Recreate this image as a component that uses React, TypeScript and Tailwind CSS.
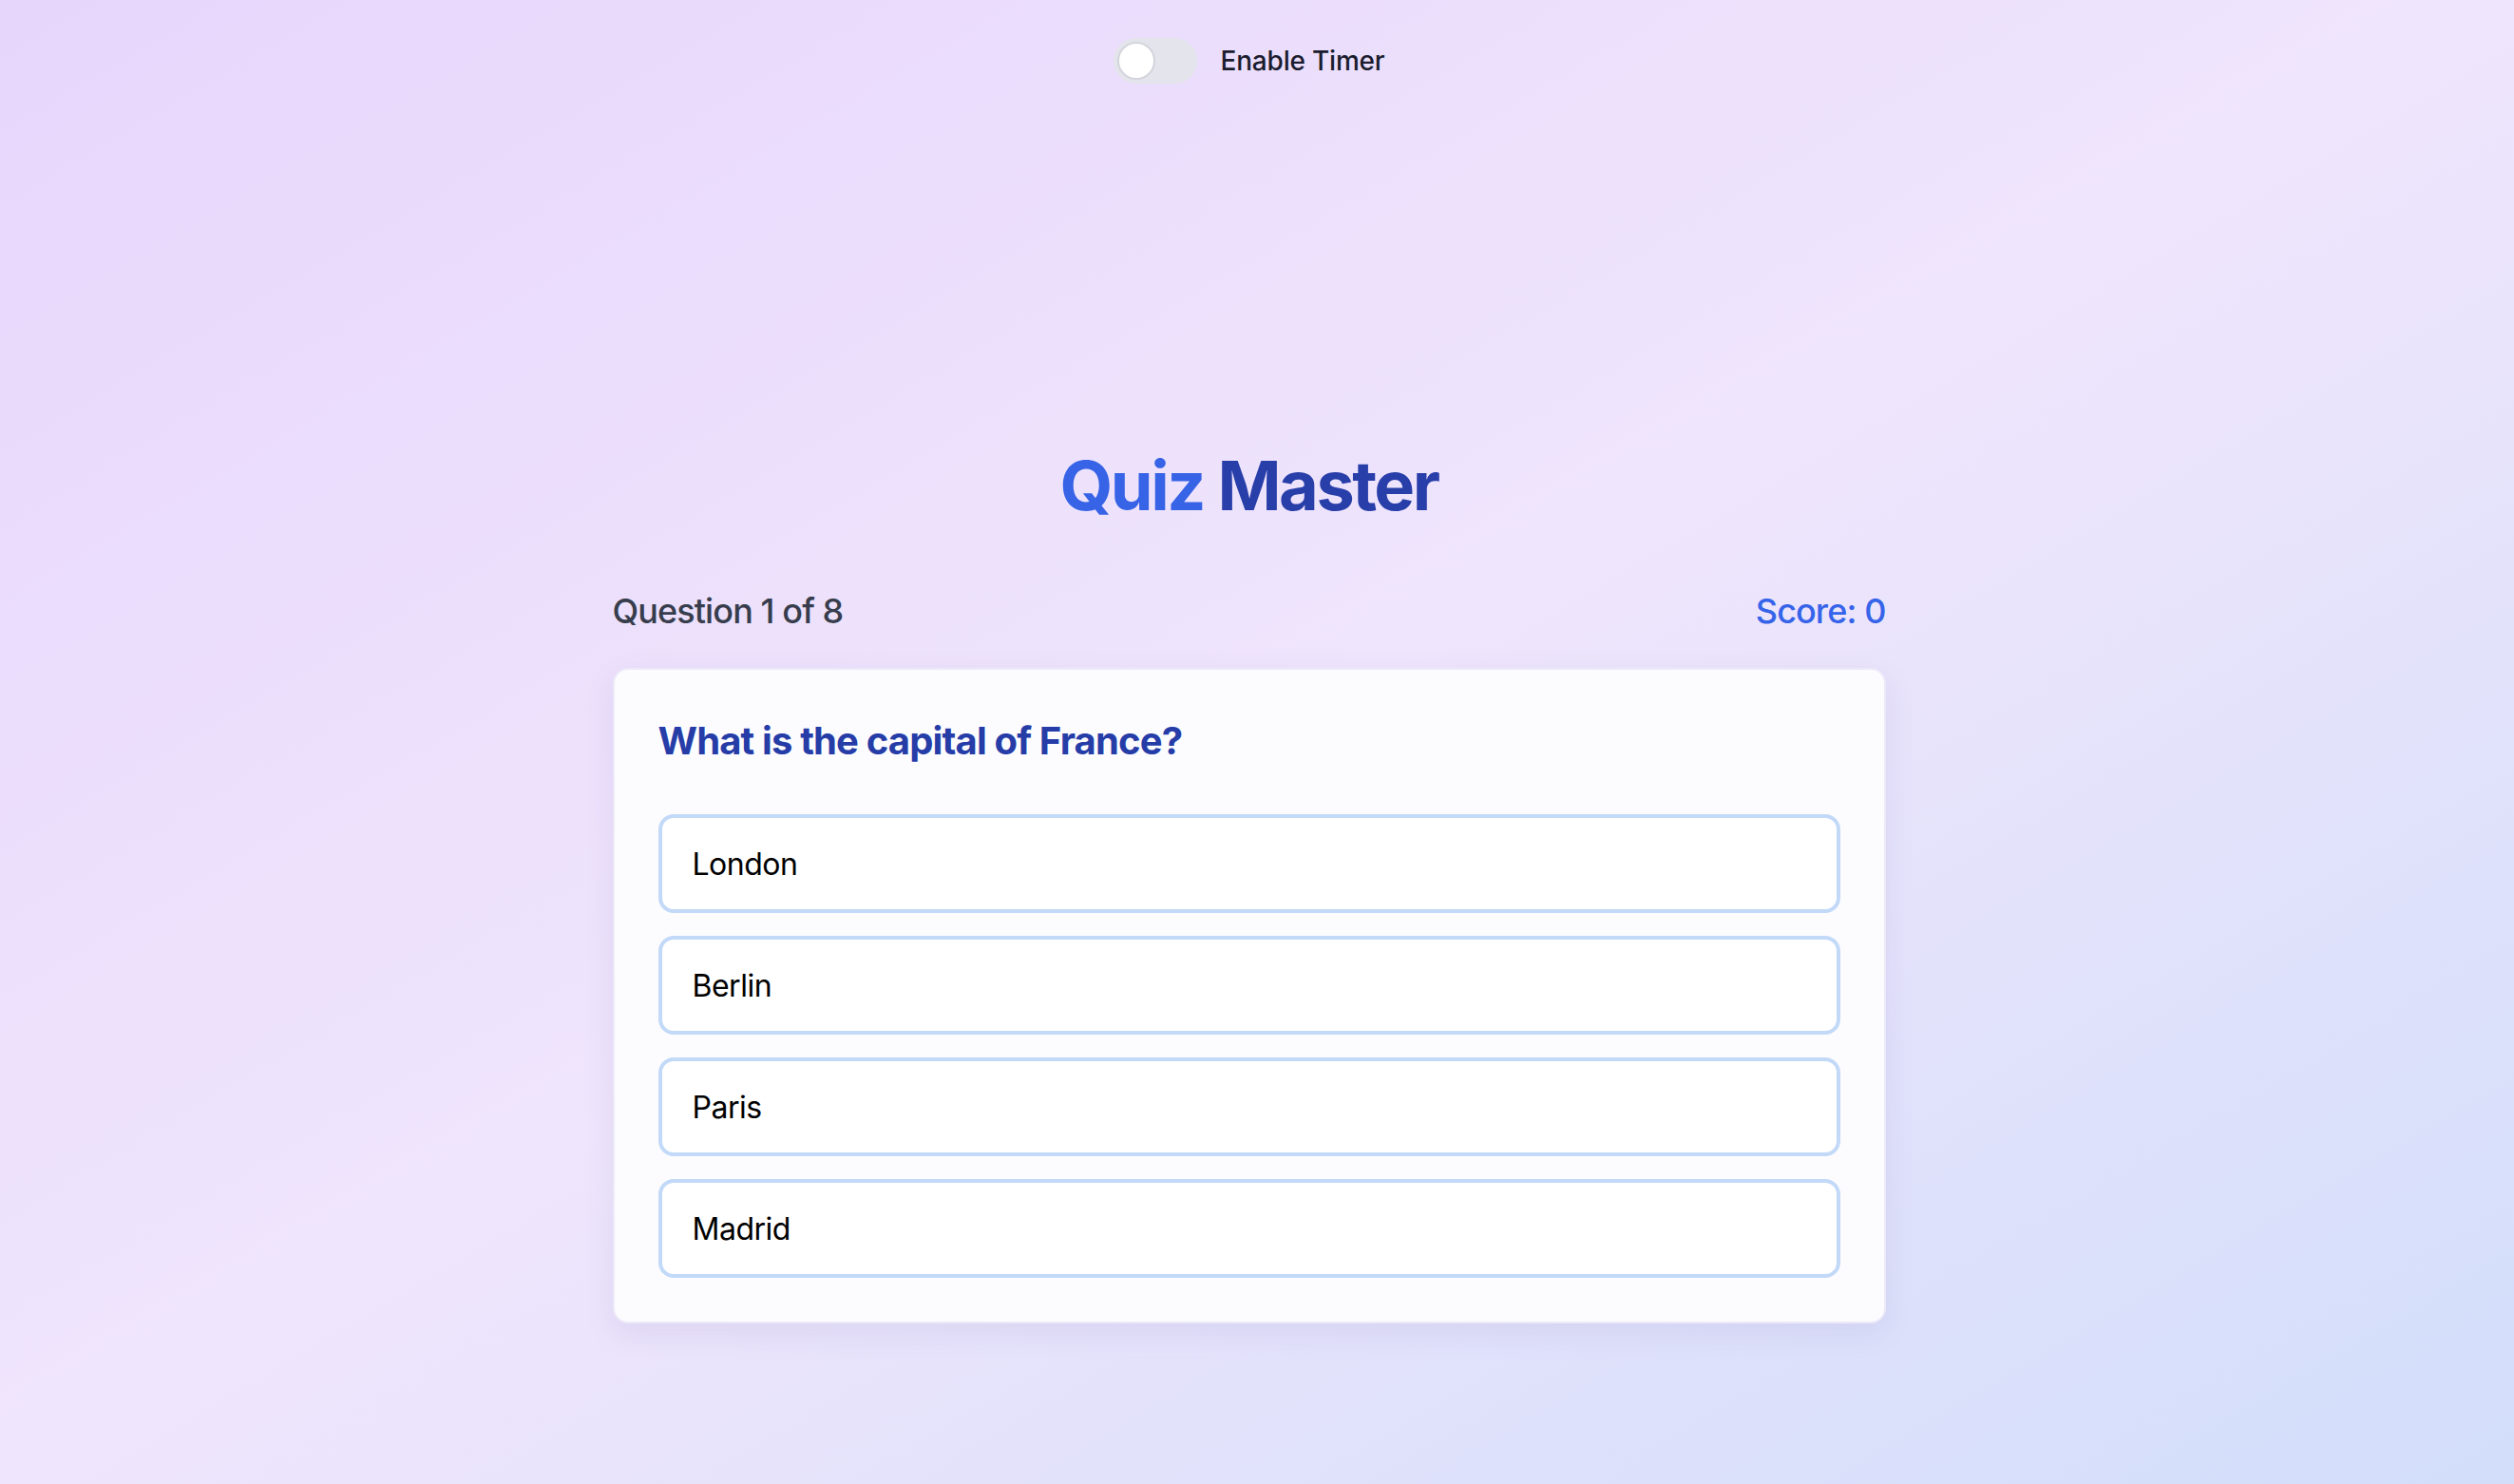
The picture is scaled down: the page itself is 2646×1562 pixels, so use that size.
import React from "react";

const options = ["London", "Berlin", "Paris", "Madrid"];

export default function App() {
  return (
    <div className="min-h-screen h-[1562px] w-full bg-linear-to-br from-[#e7d6fc] via-[#efe5fc] to-[#d2defa] pr-[17px] font-['Inter',sans-serif]">
      <div className="flex items-center justify-center gap-[25px] pt-[40px]">
        <button className="flex h-[48px] w-[88px] items-center rounded-full bg-[#e4e5ec] px-[4px]">
          <span className="block h-[40px] w-[40px] rounded-full border-2 border-[#d4d5dc] bg-white" />
        </button>
        <span className="text-[28px] leading-[40px] font-medium tracking-[-0.2px] text-[#1b1c2e]">Enable Timer</span>
      </div>

      <div className="mx-auto mt-[383px] w-[1340px]">
        <h1 className="mb-[64px] text-center text-[72px] leading-[80px] font-bold tracking-[-2.5px]">
          <span className="text-[#3763e6]">Quiz</span>{" "}
          <span className="text-[#283ea9]">Master</span>
        </h1>

        <div className="mb-[32px] flex items-center justify-between text-[36px] leading-[56px] font-medium tracking-[-0.9px]">
          <span className="text-[#373d4c]">Question 1 of 8</span>
          <span className="text-[#3563e9]">Score: 0</span>
        </div>

        <div className="rounded-[16px] border-2 border-[#eceaf8] bg-[#fcfcff] px-[46px] pt-[47px] pb-[46px] shadow-[0_10px_30px_rgba(120,110,170,0.12)]">
          <h2 className="mb-[49px] text-[40px] leading-[56px] font-bold tracking-[-0.85px] text-[#263da8]">
            What is the capital of France?
          </h2>
          <div className="flex flex-col gap-[24px]">
            {options.map((o) => (
              <button
                key={o}
                className="flex h-[104px] w-full items-center rounded-[16px] border-4 border-[#c2d9f8] bg-white px-[32px] pt-[2px] text-left text-[32px] tracking-[-0.5px] text-black"
              >
                {o}
              </button>
            ))}
          </div>
        </div>
      </div>
    </div>
  );
}
